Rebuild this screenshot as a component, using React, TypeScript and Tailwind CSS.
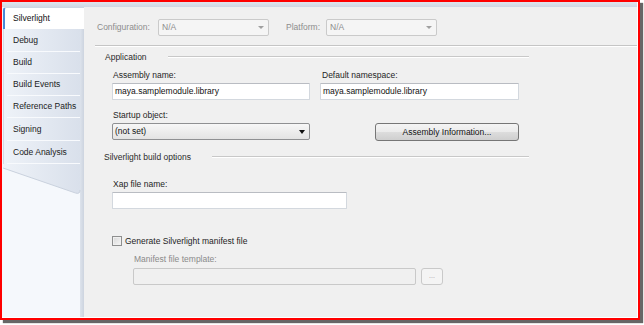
import React from "react";

const tabs = [
  { label: "Debug", h: "h-[23px]" },
  { label: "Build", h: "h-[22px]" },
  { label: "Build Events", h: "h-[22px]" },
  { label: "Reference Paths", h: "h-[22px]" },
  { label: "Signing", h: "h-[23px]" },
  { label: "Code Analysis", h: "h-[23px]" },
];

const DisabledCombo = ({ className = "" }: { className?: string }) => (
  <div
    className={`w-[111px] h-[17px] flex items-center justify-between pl-[3px] pr-[4px] border border-[#cacaca] rounded-[2px] bg-[#f5f5f5] text-[#8d8d8d] ${className}`}
  >
    <span>N/A</span>
    <span className="w-0 h-0 border-l-[3px] border-r-[3px] border-t-[3px] border-l-transparent border-r-transparent border-t-[#a0a0a0]" />
  </div>
);

const GroupHeader = ({ title, className = "" }: { title: string; className?: string }) => (
  <div className={`flex items-center h-[12px] text-[#2b2b2b] ${className}`}>
    <span className="leading-[12px]">{title}</span>
    <div className="flex-1 ml-[21px] h-[2px] border-t border-[#c8c8c8] border-b border-b-white" />
  </div>
);

const TextBox = ({ value, className = "" }: { value?: string; className?: string }) => (
  <div
    className={`h-[17px] flex items-center pl-[2px] bg-white border border-[#d3d8de] border-t-[#b9bcc2] rounded-[1px] text-[#111] ${className}`}
  >
    {value}
  </div>
);

export default function App() {
  return (
    <div className="w-[644px] h-[325px] bg-white font-['Liberation_Sans',Arial,sans-serif] text-[8.5px] text-[#1e1e1e]">
      <div className="w-[640px] h-[320px] border-2 border-[#ff0000] shadow-[3px_3px_1px_rgba(0,0,0,0.6)]">
        <div className="h-full flex flex-col border-r border-b border-white">
          <div className="h-[5px] bg-[linear-gradient(#dfe5ee,#cfd7e3)]" />

          <div className="flex flex-1 min-h-0">
            {/* tab strip */}
            <div className="w-[82px] bg-[linear-gradient(to_right,#f5f8fc_0,#f5f8fc_78px,#dde3ec_78px,#cdd4df_82px)] flex flex-col">
              <div className="ml-[1px] w-[81px] h-[22px] bg-white border-l-2 border-[#4a8ad8] border-t border-t-[#cdd6e2] rounded-tl-[3px] flex items-center pl-[8px] text-[#111]">
                Silverlight
              </div>
              <div className="ml-[1px] w-[77px] flex flex-col border-l border-[#d2d9e4]">
                {tabs.map((t) => (
                  <div
                    key={t.label}
                    className={`${t.h} flex flex-col bg-[linear-gradient(to_right,#eef2f8,#d9e0eb)]`}
                  >
                    <div className="flex-1 flex items-center pl-[9px] text-[#1b1b1b]">{t.label}</div>
                    <div className="h-px ml-[3px] bg-[#f8fafd]" />
                  </div>
                ))}
              </div>
              <svg width="78" height="31" viewBox="0 0 78 31" className="ml-[1px] block">
                <defs>
                  <linearGradient id="tabtail" x1="0" x2="1" y1="0" y2="0">
                    <stop offset="0" stopColor="#eef2f8" />
                    <stop offset="1" stopColor="#d9e0eb" />
                  </linearGradient>
                </defs>
                <path d="M0 0 H77 V26 Q77 30.5 72.5 29 L0 4 Z" fill="url(#tabtail)" />
                <path d="M0 4 L72.5 29 Q77 30.5 77 26" fill="none" stroke="#c9d1dd" strokeWidth="1" />
              </svg>
            </div>

            {/* page */}
            <div className="flex-1 bg-[#f0f0f0] flex flex-col">
              <div className="mt-[12px] ml-[13px] flex items-center h-[17px]">
                <span className="w-[61px] text-[#8d8d8d]">Configuration:</span>
                <DisabledCombo />
                <span className="ml-[17px] w-[40px] text-[#8d8d8d]">Platform:</span>
                <DisabledCombo />
              </div>
              <div className="mt-[9px] ml-[11px] h-[2px] border-t border-[#c5c5c5] border-b border-b-white" />

              <GroupHeader title="Application" className="mt-[4px] ml-[21px] w-[424px]" />

              <div className="mt-[6px] ml-[28px] flex gap-[10px]">
                <div className="w-[198px] flex flex-col">
                  <span className="pl-[1px] leading-[12px]">Assembly name:</span>
                  <TextBox value="maya.samplemodule.library" className="mt-[2px]" />
                </div>
                <div className="w-[199px] flex flex-col">
                  <span className="pl-[2px] leading-[12px]">Default namespace:</span>
                  <TextBox value="maya.samplemodule.library" className="mt-[2px]" />
                </div>
              </div>

              <div className="mt-[9px] ml-[28px] flex items-start">
                <div className="w-[198px] flex flex-col">
                  <span className="pl-[1px] leading-[12px]">Startup object:</span>
                  <div className="mt-[2px] h-[17px] flex items-center justify-between pl-[2px] pr-[4px] border border-[#8f9092] rounded-[2px] bg-[linear-gradient(#f7f7f7,#e3e3e3)] text-[#111]">
                    <span>(not set)</span>
                    <span className="w-0 h-0 border-l-[3px] border-r-[3px] border-t-[4px] border-l-transparent border-r-transparent border-t-[#111]" />
                  </div>
                </div>
                <button className="mt-[14px] ml-[65px] w-[144px] h-[18px] flex items-center justify-center border border-[#767676] rounded-[3px] bg-[linear-gradient(#f4f4f4_0%,#ebebeb_50%,#dddddd_50%,#cfcfcf_100%)] text-[#111]">
                  Assembly Information...
                </button>
              </div>

              <GroupHeader title="Silverlight build options" className="mt-[10px] ml-[20px] w-[425px]" />

              <div className="mt-[15px] ml-[28px] w-[235px] flex flex-col">
                <span className="pl-[1px] leading-[12px]">Xap file name:</span>
                <TextBox className="mt-[2px] h-[16px]" />
              </div>

              <div className="mt-[26px] ml-[28px] flex items-center h-[12px]">
                <span className="w-[10px] h-[10px] border border-[#8e8f8f] bg-[linear-gradient(135deg,#d8d8d8,#f6f6f6)] shadow-[inset_0_0_0_1px_#f0f0f0]" />
                <span className="ml-[3px] leading-[12px]">Generate Silverlight manifest file</span>
              </div>

              <div className="ml-[50px] flex flex-col">
                <span className="mt-[6px] leading-[12px] text-[#8a8a8a]">Manifest file template:</span>
                <div className="mt-[3px] flex">
                  <div className="-ml-[1px] w-[283px] h-[17px] border border-[#c9c9c9] rounded-[2px] bg-[#f0f0f0]" />
                  <div className="ml-[5px] w-[22px] h-[17px] flex items-center justify-center border border-[#c9c9c9] rounded-[3px] bg-[#f4f4f4] text-[#a0a0a0] text-[7px]">
                    ...
                  </div>
                </div>
              </div>
            </div>
          </div>
        </div>
      </div>
    </div>
  );
}
